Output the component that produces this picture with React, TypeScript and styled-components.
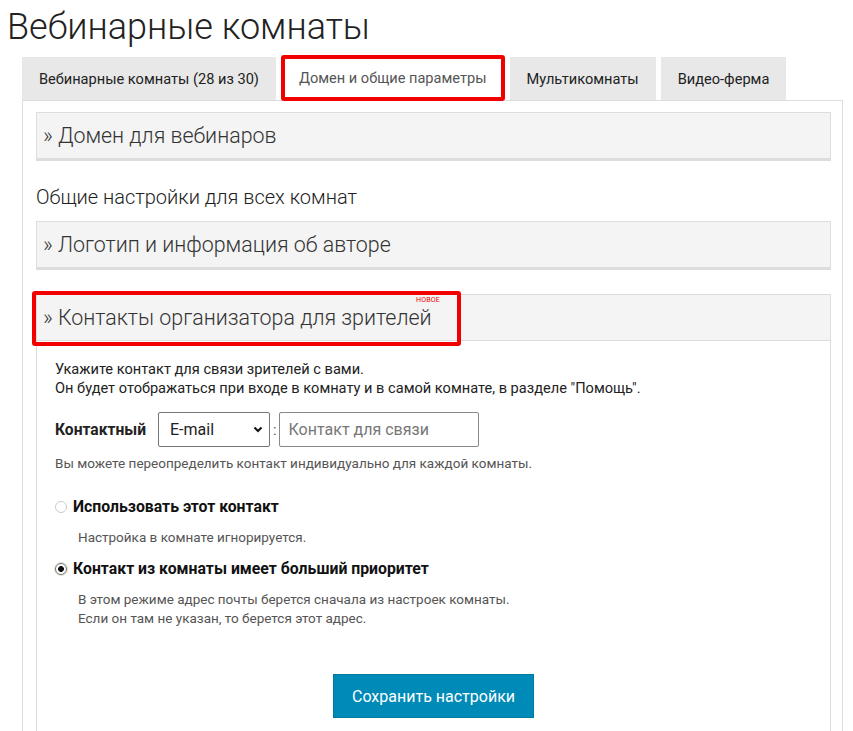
import React, { FC } from 'react';
import styled, { createGlobalStyle } from 'styled-components';

const Global = createGlobalStyle`
    html, body {
        margin: 0;
        padding: 0;
        background: #fff;
    }
    body {
        font-family: Roboto, "Liberation Sans", sans-serif;
        color: #222;
    }
`;

const Page = styled.div`
    padding: 0 10px 0 22px;
    height: 731px;
    overflow: hidden;
`;

const Title = styled.h1`
    margin: 0 0 0 -15px;
    padding-top: 3px;
    font-size: 36px;
    font-weight: 300;
    line-height: 48px;
    color: #222;
`;

const Tabs = styled.div`
    display: flex;
    gap: 5px;
    margin-top: 6px;
    height: 43px;
`;

const Tab = styled.div<{ $active?: boolean; $marked?: boolean }>`
    display: flex;
    align-items: center;
    font-size: 14.6px;
    background: ${(p) => (p.$active ? '#fff' : '#e8e8e8')};
    color: ${(p) => (p.$active ? '#555' : '#222')};
    border: ${(p) => (p.$marked ? '4px solid #f20000' : 'none')};
    border-radius: ${(p) => (p.$marked ? '3px' : '0')};
    box-sizing: border-box;
    height: ${(p) => (p.$marked ? '46px' : '43px')};
    margin-top: ${(p) => (p.$marked ? '-2px' : '0')};
    padding: ${(p) => (p.$marked ? '0 14px' : '0 17px')};
`;

const Panel = styled.div`
    border: 1px solid #ddd;
    border-bottom: none;
    padding: 11px 11px 0 13px;
    width: 821px;
    box-sizing: border-box;
    min-height: 700px;
`;

const Section = styled.div`
    position: relative;
    background: #f4f4f4;
    border: 1px solid #ddd;
    border-bottom: 3px solid #ddd;
    height: 49px;
    box-sizing: border-box;
    display: flex;
    align-items: center;
    padding-left: 6px;
    font-size: 21.4px;
    font-weight: 300;
    color: #333;
`;

const Subheading = styled.div`
    font-size: 20px;
    font-weight: 300;
    color: #222;
    margin: 24px 0 12px 0;
`;

const ContactBlock = styled.div`
    margin-top: 24px;
`;

const ContactHeader = styled(Section)`
    border-bottom: 1px solid #ddd;
    height: 47px;
`;

const Marker = styled.div`
    position: absolute;
    left: -5px;
    top: -4px;
    width: 429px;
    height: 55px;
    border: 4px solid #f20000;
    border-radius: 3px;
    box-sizing: border-box;
    pointer-events: none;
`;

const Badge = styled.span`
    position: absolute;
    left: 379px;
    top: 1px;
    font-size: 7px;
    font-weight: 400;
    color: #e00;
    letter-spacing: 0.2px;
`;

const Body = styled.div`
    border: 1px solid #ddd;
    border-top: none;
    padding: 19px 18px 0 18px;
    min-height: 420px;
    font-size: 14.6px;
    color: #222;
`;

const Lead = styled.p`
    margin: 0;
    line-height: 19px;
`;

const ContactRow = styled.div`
    display: flex;
    align-items: center;
    margin-top: 14px;
`;

const Label = styled.span`
    font-weight: 700;
    font-size: 15.6px;
    margin-right: 12px;
`;

const SelectBox = styled.div`
    position: relative;
    width: 112px;
    height: 35px;
    border: 1px solid #767676;
    border-radius: 2px;
    box-sizing: border-box;
    display: flex;
    align-items: center;
    padding-left: 11px;
    font-size: 16px;
    color: #222;
`;

const Chevron = styled.svg`
    position: absolute;
    right: 6px;
    top: 13px;
`;

const Colon = styled.span`
    margin: 0 2px 0 3px;
    color: #555;
`;

const Input = styled.div`
    width: 200px;
    height: 35px;
    border: 1px solid #888;
    border-radius: 2px;
    box-sizing: border-box;
    display: flex;
    align-items: center;
    padding-left: 9px;
    font-size: 16px;
    color: #777;
`;

const Hint = styled.p<{ $indent?: boolean }>`
    margin: 0;
    font-size: 13.5px;
    color: #555;
    line-height: 19px;
    padding-left: ${(p) => (p.$indent ? '23px' : '0')};
`;

const Option = styled.div`
    display: flex;
    align-items: center;
    gap: 6px;
    font-size: 15.8px;
    font-weight: 700;
    color: #111;
`;

const Radio = styled.span<{ $checked?: boolean }>`
    width: 12px;
    height: 12px;
    border-radius: 50%;
    box-sizing: border-box;
    border: 1px solid ${(p) => (p.$checked ? '#777' : '#ccc')};
    background: ${(p) => (p.$checked ? 'radial-gradient(circle, #111 0 2.6px, #fff 3.2px)' : '#fff')};
    box-shadow: ${(p) => (p.$checked ? '0 0 0 1px #e6e0cf' : 'none')};
`;

const Actions = styled.div`
    display: flex;
    justify-content: center;
    margin-top: 46px;
`;

const SaveButton = styled.button`
    background: #008ab8;
    color: #fff;
    border: 1px solid #007aa3;
    font-family: Roboto, "Liberation Sans", sans-serif;
    font-size: 16px;
    padding: 0 14px;
    height: 44px;
    width: 201px;
    cursor: pointer;
`;

const App: FC = () => {
    return (
        <Page>
            <Global />
            <Title>Вебинарные комнаты</Title>
            <Tabs>
                <Tab>Вебинарные комнаты (28 из 30)</Tab>
                <Tab $active $marked>Домен и общие параметры</Tab>
                <Tab>Мультикомнаты</Tab>
                <Tab>Видео-ферма</Tab>
            </Tabs>
            <Panel>
                <Section>» Домен для вебинаров</Section>
                <Subheading>Общие настройки для всех комнат</Subheading>
                <Section>» Логотип и информация об авторе</Section>
                <ContactBlock>
                    <ContactHeader>
                        » Контакты организатора для зрителей
                        <Badge>НОВОЕ</Badge>
                        <Marker />
                    </ContactHeader>
                    <Body>
                        <Lead>Укажите контакт для связи зрителей с вами.</Lead>
                        <Lead>Он будет отображаться при входе в комнату и в самой комнате, в разделе "Помощь".</Lead>
                        <ContactRow>
                            <Label>Контактный</Label>
                            <SelectBox>
                                E-mail
                                <Chevron width="10" height="7" viewBox="0 0 10 7">
                                    <path d="M1.5 1.5 L5 5 L8.5 1.5" fill="none" stroke="#111" strokeWidth="2" />
                                </Chevron>
                            </SelectBox>
                            <Colon>:</Colon>
                            <Input>Контакт для связи</Input>
                        </ContactRow>
                        <Hint style={{ marginTop: 7 }}>Вы можете переопределить контакт индивидуально для каждой комнаты.</Hint>
                        <Option style={{ marginTop: 24 }}>
                            <Radio />
                            Использовать этот контакт
                        </Option>
                        <Hint $indent style={{ marginTop: 12 }}>Настройка в комнате игнорируется.</Hint>
                        <Option style={{ marginTop: 12 }}>
                            <Radio $checked />
                            Контакт из комнаты имеет больший приоритет
                        </Option>
                        <Hint $indent style={{ marginTop: 12 }}>
                            В этом режиме адрес почты берется сначала из настроек комнаты.
                        </Hint>
                        <Hint $indent>Если он там не указан, то берется этот адрес.</Hint>
                        <Actions>
                            <SaveButton>Сохранить настройки</SaveButton>
                        </Actions>
                    </Body>
                </ContactBlock>
            </Panel>
        </Page>
    );
};

export default App;
